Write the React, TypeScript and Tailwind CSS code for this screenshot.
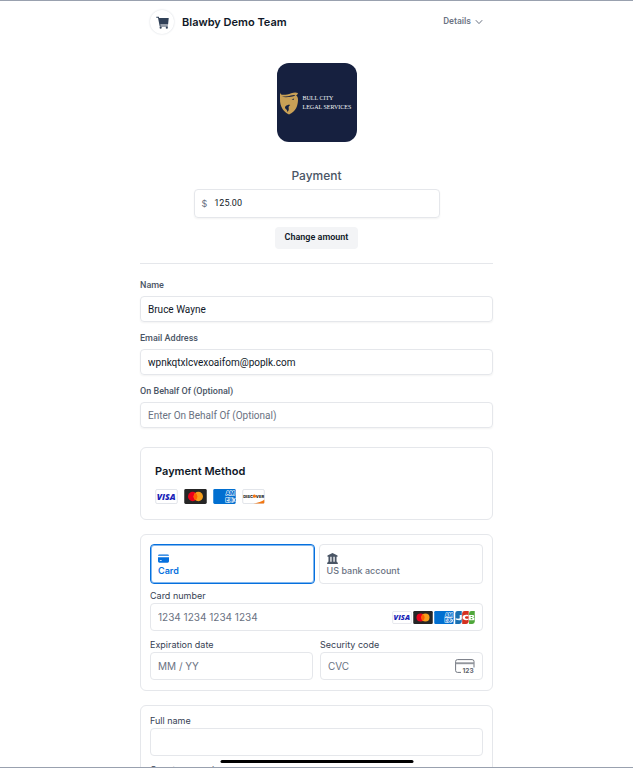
import React, { useState } from 'react';

type PaymentType = 'card' | 'bank';

interface FieldProps {
  id: string;
  label: string;
  type?: string;
  defaultValue?: string;
  placeholder?: string;
}

interface IconProps {
  className?: string;
}

const CartIcon: React.FC<IconProps> = ({ className }) => (
  <svg viewBox="0 0 24 24" className={className} fill="currentColor" aria-hidden="true">
    <path d="M.5 1.500h4.600l.8 2.400H23.500l-1.200 12H8l.4 1.700h13.400v1.800H6.900L3.700 3.300H.5z" />
    <circle cx="8.600" cy="21.500" r="2" />
    <circle cx="20" cy="21.500" r="2" />
  </svg>
);

const ChevronIcon: React.FC<IconProps> = ({ className }) => (
  <svg viewBox="0 0 8 8" className={className} fill="none" stroke="currentColor" strokeWidth="1" aria-hidden="true">
    <path d="M.8 2.200 4 5.600l3.200-3.400" />
  </svg>
);

const BullLogo: React.FC<IconProps> = ({ className }) => (
  <svg viewBox="0 0 20 24" className={className} aria-hidden="true">
    <path
      fill="#c9a056"
      d="M1 1.500c.3 1.600 1.300 2.300 3 2.300 3.200 0 5.600-.5 8.200-1.500C14.500 1.400 16.800 1 19 2c-.3 1.200-.9 2-1.900 2.600 1.500 1 2.100 2.600 1.900 4.700-.2 2.500-.4 5-1.800 7.700-1.500 2.900-3.900 4.900-7.200 6.500-2.500-1.300-4.800-3-6.300-5.300C1.600 15 .9 11.600 1 8z"
    />
    <path
      fill="#16203f"
      d="M2.800 5.200c3.300.8 6.400.3 9-.6 1.600-.5 3-.8 4.500-.6-.9 1.300-2.400 1.600-4.400 1.700-3 .2-5.900 1.200-9.100-.5zM6.500 15.200c1.700-1.200 2.900-1.800 4.800-1.300-1.500.8-1.900 2-1.600 3.300.4 1.700-.4 3-1.500 3.800.2-1.500-.3-2.500-1.600-3.300-.7-.5-.8-1.600-.1-2.500zM12.700 8.300l2.500-.9-.7 1.500z"
    />
  </svg>
);

const VisaBadge: React.FC<IconProps> = ({ className }) => (
  <svg viewBox="0 0 24 16" className={className} role="img" aria-label="Visa">
    <rect x=".5" y=".5" width="23" height="15" rx="1.500" fill="#fff" stroke="#dfe2e8" />
    <text x="11.700" y="11.400" textAnchor="middle" fontFamily="Open Sans, sans-serif" fontSize="9.200" fontWeight="800" fontStyle="italic" fill="#1a1fb8">VISA</text>
  </svg>
);

const MastercardBadge: React.FC<IconProps> = ({ className }) => (
  <svg viewBox="0 0 24 16" className={className} role="img" aria-label="Mastercard">
    <rect width="24" height="16" rx="1.500" fill="#252525" />
    <circle cx="9" cy="8" r="5" fill="#eb001b" />
    <circle cx="15" cy="8" r="5" fill="#f79e1b" />
    <path d="M12 4a5 5 0 0 1 0 8 5 5 0 0 1 0-8z" fill="#ff5f00" />
  </svg>
);

const AmexBadge: React.FC<IconProps> = ({ className }) => (
  <svg viewBox="0 0 24 16" className={className} role="img" aria-label="American Express">
    <rect width="24" height="16" rx="1.500" fill="#016fd0" />
    <g fontFamily="Inter, sans-serif" fontSize="5.600" fontWeight="800" fill="#016fd0" stroke="#fff" strokeWidth="1.100" paintOrder="stroke">
      <text x="13.200" y="6.900">AM</text>
      <text x="13" y="13.900">EX</text>
    </g>
    <path d="m20.800 9.600 2.700 4.400m0-4.400-2.700 4.400" stroke="#fff" strokeWidth="1" fill="none" />
  </svg>
);

const DiscoverBadge: React.FC<IconProps> = ({ className }) => (
  <svg viewBox="0 0 24 16" className={className} role="img" aria-label="Discover">
    <rect x=".5" y=".5" width="23" height="15" rx="1.500" fill="#fff" stroke="#dfe2e8" />
    <path d="M23.500 11.500v3a1 1 0 0 1-1 1H12c5-.7 8.500-2 11.500-4z" fill="#f27712" />
    <g fontFamily="Inter, sans-serif" fontSize="4.300" fontWeight="800" fill="#222">
      <text x="1" y="9.200">DISC</text>
      <text x="14.500" y="9.200">VER</text>
    </g>
    <circle cx="12.900" cy="7.600" r="1.800" fill="#f27712" />
  </svg>
);

const JcbBadge: React.FC<IconProps> = ({ className }) => (
  <svg viewBox="0 0 24 16" className={className} role="img" aria-label="JCB">
    <path d="M3 0h5v13a3 3 0 0 1-3 3H0V3a3 3 0 0 1 3-3z" fill="#1a6fb0" />
    <path d="M11.500 0h5v13a3 3 0 0 1-3 3h-5V3a3 3 0 0 1 3-3z" fill="#d5301f" />
    <path d="M20 0h4v13a3 3 0 0 1-3 3h-4V3a3 3 0 0 1 3-3z" fill="#4fa73a" />
    <path d="M5.500 5H8v4.300c0 1.300-1.200 2.200-3.200 2.200-1.700 0-3.100-.4-4.300-.9V8.800c2.300.8 5 1 5-.4zM16.300 5.100v1.700c-2-.8-4.300-.5-4.300 1.200s2.300 2 4.300 1.200v1.700c-3.300.9-7.300.4-7.300-2.900s4-3.800 7.300-2.900zM17 5h4.600c2.200 0 2.300 2.500.4 2.900 2.300.4 2.200 3.400-.2 3.400H17zm2 1.100v1.300h2V6.100zm0 2.500V10h2V8.600z" fill="#fff" />
  </svg>
);

const CardIcon: React.FC<IconProps> = ({ className }) => (
  <svg viewBox="0 0 12 9" className={className} fill="currentColor" aria-hidden="true">
    <path d="M1.500 0h9A1.500 1.500 0 0 1 12 1.500H0A1.500 1.500 0 0 1 1.500 0zM0 3h12v4.500A1.500 1.500 0 0 1 10.500 9h-9A1.500 1.500 0 0 1 0 7.500zm2 3v1h2V6z" />
  </svg>
);

const BankIcon: React.FC<IconProps> = ({ className }) => (
  <svg viewBox="0 0 12 12" className={className} fill="currentColor" aria-hidden="true">
    <path d="M6 0 11.500 2.800V4.200H.5V2.800zM1.600 4.200h2V9.600h-2zM5 4.200h2V9.600H5zM8.400 4.200h2V9.600h-2zM1 9.600h10v.8h.8V12H.2v-1.600H1z" />
  </svg>
);

const CvcIcon: React.FC<IconProps> = ({ className }) => (
  <svg viewBox="0 0 20 15" className={className} aria-hidden="true">
    <path d="M6 13.400H2.500A1.900 1.900 0 0 1 .6 11.500v-9A1.900 1.900 0 0 1 2.500.6h14.600A1.900 1.900 0 0 1 19 2.500v6" fill="none" stroke="#727780" strokeWidth="1" />
    <path d="M.6 3.300H19v1.900H.6z" fill="#92969c" />
    <text x="7.500" y="14" fontFamily="Inter, sans-serif" fontSize="6.500" fontWeight="700" fill="#5d626b">123</text>
  </svg>
);

const Field: React.FC<FieldProps> = ({ id, label, type = 'text', defaultValue, placeholder }) => (
  <div className="font-['Roboto',sans-serif]">
    <label htmlFor={id} className="block text-[9px] leading-4 font-medium text-gray-600">{label}</label>
    <input
      id={id}
      type={type}
      defaultValue={defaultValue}
      placeholder={placeholder}
      className="mt-[3px] block h-[26px] w-full rounded border border-gray-200 px-[7px] text-[10px] text-gray-900 shadow-xs placeholder:text-gray-500"
    />
  </div>
);

const StripeField: React.FC<FieldProps & { children?: React.ReactNode }> = ({ id, label, placeholder, children }) => (
  <div className="min-w-0 flex-1">
    <label htmlFor={id} className="block text-[9px] leading-3 text-gray-700">{label}</label>
    <div className="mt-px flex h-7 items-center rounded border border-gray-200 px-[7px]">
      <input id={id} type="text" placeholder={placeholder} className="min-w-0 flex-1 text-[10px] text-gray-800 placeholder:text-gray-500" />
      {children}
    </div>
  </div>
);

const App: React.FC = () => {
  const [method, setMethod] = useState<PaymentType>('card');

  return (
    <div className="relative h-screen overflow-hidden border-y border-gray-400 bg-white font-['Inter',sans-serif] text-gray-900">
      <div className="mx-auto max-w-[353px]">
        <header className="flex h-[42px] items-center justify-between px-[10px]">
          <div className="flex items-center gap-2">
            <span className="flex size-6 items-center justify-center rounded-full shadow-[0_0_2px_#d1d5db]">
              <CartIcon className="size-[13px] text-slate-700" />
            </span>
            <h1 className="text-[11px] font-semibold">Blawby Demo Team</h1>
          </div>
          <button type="button" className="flex items-center gap-1 font-['Roboto',sans-serif] text-[9px] font-medium text-gray-500">
            Details
            <ChevronIcon className="size-2" />
          </button>
        </header>

        <main>
          <section className="flex flex-col items-center border-b border-gray-200 pt-5 pb-[14px]">
            <div className="flex h-[79px] w-20 items-center gap-1 rounded-xl bg-[#16203f] px-[2px]">
              <BullLogo className="h-6 w-5 shrink-0" />
              <p className="font-['Liberation_Serif',serif] text-[6px] leading-[9px] whitespace-nowrap text-slate-100">
                BULL CITY
                <br />
                LEGAL SERVICES
              </p>
            </div>
            <label htmlFor="amount" className="mt-[26px] text-xs leading-4 font-medium text-gray-600">Payment</label>
            <div className="mt-[5px] flex h-[29px] w-[246px] items-center gap-[7px] rounded border border-gray-200 px-[7px] shadow-xs">
              <span className="text-[9px] text-gray-500">$</span>
              <input id="amount" type="text" defaultValue="125.00" className="min-w-0 flex-1 font-['Roboto',sans-serif] text-[9px] text-gray-900" />
            </div>
            <button type="button" className="mt-[9px] h-[22px] rounded bg-gray-100 px-[10px] font-['Roboto',sans-serif] text-[9px] font-semibold">Change amount</button>
          </section>

          <form className="pt-[13px]">
            <div className="flex flex-col gap-2">
              <Field id="name" label="Name" defaultValue="Bruce Wayne" />
              <Field id="email" label="Email Address" type="email" defaultValue="wpnkqtxlcvexoaifom@poplk.com" />
              <Field id="behalf" label="On Behalf Of (Optional)" placeholder="Enter On Behalf Of (Optional)" />
            </div>

            <section className="mt-[19px] h-[73px] rounded-md border border-gray-200 px-[14px] pt-[15px]">
              <h2 className="text-[11px] leading-4 font-semibold">Payment Method</h2>
              <div className="mt-[10px] flex gap-[6px]">
                <VisaBadge className="h-[15px] w-[23px]" />
                <MastercardBadge className="h-[15px] w-[23px]" />
                <AmexBadge className="h-[15px] w-[23px]" />
                <DiscoverBadge className="h-[15px] w-[23px]" />
              </div>
            </section>

            <section className="mt-[14px] rounded-md border border-gray-200 p-[9px]">
              <div className="flex gap-1">
                <button
                  type="button"
                  aria-pressed={method === 'card'}
                  onClick={() => setMethod('card')}
                  className={`flex h-10 flex-1 flex-col items-start justify-end rounded border px-[7px] pb-[6px] text-[9px] leading-3 font-semibold ${method === 'card' ? 'border-[#0570de] text-[#0570de] ring-1 ring-[#0570de]/50 ring-inset' : 'border-gray-200 text-gray-500'}`}
                >
                  <CardIcon className="mb-0.5 h-[9px] w-[11px]" />
                  Card
                </button>
                <button
                  type="button"
                  aria-pressed={method === 'bank'}
                  onClick={() => setMethod('bank')}
                  className={`flex h-10 flex-1 flex-col items-start justify-end rounded border px-[7px] pb-[6px] text-[9px] leading-3 font-medium ${method === 'bank' ? 'border-[#0570de] text-[#0570de] ring-1 ring-[#0570de]/50 ring-inset' : 'border-gray-200 text-gray-500'}`}
                >
                  <BankIcon className="mb-px size-[11px] text-gray-600" />
                  US bank account
                </button>
              </div>
              <div className="mt-[6px] flex flex-col gap-2">
                <StripeField id="card-number" label="Card number" placeholder="1234 1234 1234 1234">
                  <div className="flex gap-px">
                    <VisaBadge className="h-[13px] w-5" />
                    <MastercardBadge className="h-[13px] w-5" />
                    <AmexBadge className="h-[13px] w-5" />
                    <JcbBadge className="h-[13px] w-5" />
                  </div>
                </StripeField>
                <div className="flex gap-[7px] pb-px">
                  <StripeField id="expiry" label="Expiration date" placeholder="MM / YY" />
                  <StripeField id="cvc" label="Security code" placeholder="CVC">
                    <CvcIcon className="h-[15px] w-5" />
                  </StripeField>
                </div>
              </div>
            </section>

            <section className="mt-[14px] flex flex-col gap-2 rounded-md border border-gray-200 p-[9px]">
              <StripeField id="full-name" label="Full name" />
              <div>
                <label htmlFor="country" className="block text-[9px] leading-3 text-gray-700">Country or region</label>
                <select id="country" className="mt-px h-7 w-full rounded border border-gray-200 px-[7px] text-[10px]">
                  <option>United States</option>
                </select>
              </div>
            </section>
          </form>
        </main>
      </div>
      <div className="absolute bottom-1 left-1/2 h-[3px] w-[193px] -translate-x-1/2 rounded-full bg-black" />
    </div>
  );
};

export default App;
